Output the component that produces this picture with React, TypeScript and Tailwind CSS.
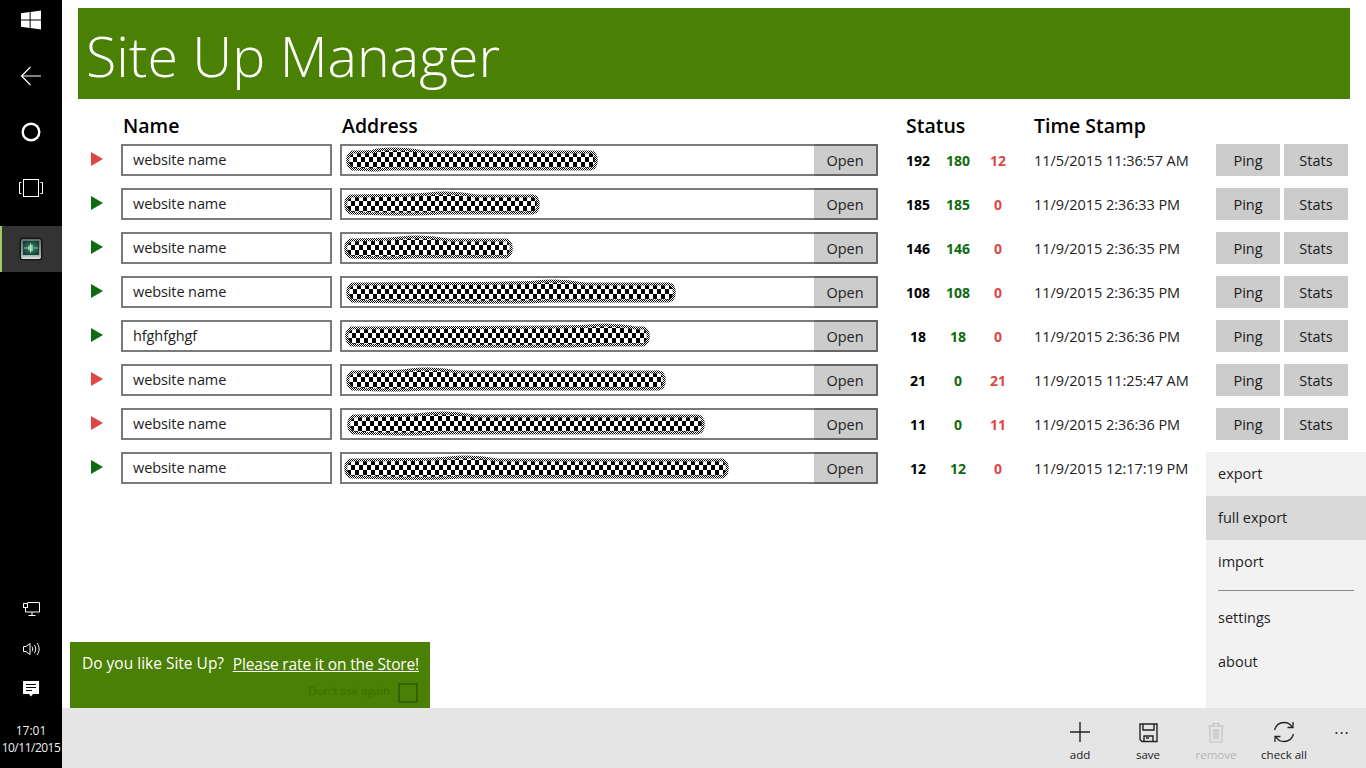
import React from "react";

type Row = { name: string; w: number; color: "red" | "green"; a: number; b: number; c: number; time: string; off: number };

const rows: Row[] = [
  { name: "website name", w: 254, color: "red", a: 192, b: 180, c: 12, time: "11/5/2015 11:36:57 AM", off: 4 },
  { name: "website name", w: 198, color: "green", a: 185, b: 185, c: 0, time: "11/9/2015 2:36:33 PM", off: 2 },
  { name: "website name", w: 171, color: "green", a: 146, b: 146, c: 0, time: "11/9/2015 2:36:35 PM", off: 2 },
  { name: "website name", w: 332, color: "green", a: 108, b: 108, c: 0, time: "11/9/2015 2:36:35 PM", off: 4 },
  { name: "hfghfghgf", w: 307, color: "green", a: 18, b: 18, c: 0, time: "11/9/2015 2:36:36 PM", off: 3 },
  { name: "website name", w: 322, color: "red", a: 21, b: 0, c: 21, time: "11/9/2015 11:25:47 AM", off: 4 },
  { name: "website name", w: 360, color: "red", a: 11, b: 0, c: 11, time: "11/9/2015 2:36:36 PM", off: 5 },
  { name: "website name", w: 387, color: "green", a: 12, b: 12, c: 0, time: "11/9/2015 12:17:19 PM", off: 2 },
];

function Scribble({ w, id }: { w: number; id: number }) {
  const bump = 20 + ((id * 53) % Math.max(1, w - 90));
  const d = `M8 5 C${w * 0.2} 4 ${bump} 5 ${bump + 12} 3 C${bump + 30} 1 ${bump + 44} 2 ${bump + 60} 5 L${w - 8} 5 C${w - 1} 6 ${w - 1} 20 ${w - 8} 22 L${bump + 24} 22 C${bump} 24 40 23 8 22 C1 20 1 7 8 5 Z`;
  return (
    <svg width={w} height={26} viewBox={`0 0 ${w} 26`} className="block shrink-0">
      <defs>
        <pattern id={`chk${id}`} width="8" height="10" patternUnits="userSpaceOnUse">
          <rect width="8" height="10" fill="#fff" />
          <rect x="0" y="0" width="4" height="5" fill="#000" />
          <rect x="4" y="5" width="4" height="5" fill="#000" />
        </pattern>
        <pattern id={`dot${id}`} width="2" height="2" patternUnits="userSpaceOnUse">
          <rect width="2" height="2" fill="#fff" />
          <rect width="1" height="1" fill="#000" />
          <rect x="1" y="1" width="1" height="1" fill="#000" />
        </pattern>
      </defs>
      <path d={d} fill={`url(#chk${id})`} stroke={`url(#dot${id})`} strokeWidth="3" />
    </svg>
  );
}

function Cell({ label }: { label: string }) {
  return (
    <button className="h-8 pt-px flex items-center justify-center bg-[#cccccc] text-[#1a1a1a] text-[14.5px]">{label}</button>
  );
}

function AppIcon() {
  return (
    <svg width="24" height="24" viewBox="0 0 24 24">
      <defs>
        <radialGradient id="scr" cx="0.5" cy="0.5" r="0.6">
          <stop offset="0" stopColor="#3f8f72" />
          <stop offset="1" stopColor="#123c36" />
        </radialGradient>
        <linearGradient id="bez" x1="0" y1="0" x2="0" y2="1">
          <stop offset="0" stopColor="#5f6e6c" />
          <stop offset="0.8" stopColor="#9fabaa" />
          <stop offset="1" stopColor="#e6eaea" />
        </linearGradient>
      </defs>
      <rect x="0.5" y="0.5" width="23" height="23" rx="3.5" fill="#181818" />
      <rect x="2" y="2" width="20" height="20" rx="2" fill="url(#bez)" />
      <rect x="4" y="4" width="16" height="14" fill="url(#scr)" />
      <path d="M5 11h4.500M14.500 11H19" stroke="#8cc9a0" strokeWidth="1" />
      <path d="M10 9v4M11.500 6.500v9M13 8v6" stroke="#b8ecc0" strokeWidth="1.200" />
    </svg>
  );
}

function Sidebar() {
  return (
    <aside className="w-[62px] shrink-0 bg-black flex flex-col items-center text-white">
      <div className="h-[40px] w-full flex items-center justify-center">
        <svg width="20" height="20" viewBox="0 0 20 20" fill="#fff">
          <path d="M0 3.200 8.600 2v7.400H0zM9.600 1.900 20 .4v9H9.600zM0 10.400h8.600v7.600L0 16.800zM9.600 10.400H20v9.200l-10.400-1.500z" />
        </svg>
      </div>
      <div className="h-[71px] w-full flex items-center justify-center">
        <svg width="22" height="20" viewBox="0 0 22 20" fill="none" stroke="#fff" strokeWidth="1.200">
          <path d="M21 10H1.500M10.500 1 1.500 10l9 9" />
        </svg>
      </div>
      <div className="h-[42px] w-full flex items-center justify-center">
        <svg width="20" height="20" viewBox="0 0 20 20" fill="none" stroke="#fff" strokeWidth="2.400">
          <circle cx="10" cy="10" r="8.300" />
        </svg>
      </div>
      <div className="h-[70px] w-full flex items-center justify-center">
        <svg width="24" height="18" viewBox="0 0 24 18" fill="none" stroke="#fff" strokeWidth="1">
          <rect x="4.500" y="0.500" width="15" height="17" />
          <path d="M2.500 3.500H.5v11h2M21.500 3.500h2v11h-2" />
        </svg>
      </div>
      <div className="h-[46px] w-full bg-[#333333] border-l-2 border-[#9ccc65] flex items-center justify-center pr-0.5 mt-[3px]">
        <AppIcon />
      </div>
      <div className="flex-1" />
      <div className="h-[40px] w-full flex items-center justify-center">
        <svg width="17" height="14" viewBox="0 0 17 14" fill="none" stroke="#fff" strokeWidth="1">
          <path d="M4.500.5h12v9.500h-14V5M9 10v3M5.500 13.500h7" />
          <rect x="0.500" y="1.500" width="4" height="4" />
        </svg>
      </div>
      <div className="h-[40px] w-full flex items-center justify-center">
        <svg width="17" height="14" viewBox="0 0 17 14" fill="none" stroke="#fff" strokeWidth="1">
          <path d="M.5 4.500h2.500L7 1.500v11L3 9.500H.5zM9 4.500c1 1.500 1 3.500 0 5M11.500 3c1.700 2.500 1.700 5.500 0 8M14 1c2.800 3.500 2.800 8.500 0 12" />
        </svg>
      </div>
      <div className="h-[40px] w-full flex items-center justify-center">
        <svg width="16" height="16" viewBox="0 0 16 16">
          <path d="M0 0h16v13h-6l-2 2.500L6 13H0z" fill="#fff" />
          <path d="M3 3.500h10M3 6.500h10M3 9.500h6" stroke="#000" strokeWidth="1" />
        </svg>
      </div>
      <div className="h-[59px] w-full flex flex-col items-center pt-[13px] text-[12px] leading-[17px] text-[#f0f0f0]">
        <span>17:01</span>
        <span className="tracking-[-0.5px] whitespace-nowrap">10/11/2015</span>
      </div>
    </aside>
  );
}

function SiteRow({ r, id }: { r: Row; id: number }) {
  return (
    <div className="h-[44px] flex items-center">
      <div className="w-[43px] pl-[13px] flex items-center pb-[2px]">
        <svg width="12" height="14" viewBox="0 0 12 14">
          <path d="M0 0 12 7 0 14z" fill={r.color === "red" ? "#e04646" : "#0e6b0e"} />
        </svg>
      </div>
      <div className="w-[211px] h-8 border-2 border-[#7a7a7a] flex items-center pl-[10px] text-[14.5px] text-[#222] tracking-[-0.1px]">{r.name}</div>
      <div className="ml-[8px] w-[538px] h-8 border-2 border-r-0 border-[#7a7a7a] flex items-center">
        <div className="flex-1 min-w-0 flex items-center overflow-hidden" style={{ paddingLeft: r.off - 1 }}>
          <Scribble w={r.w} id={id} />
        </div>
        <div className="w-[64px] h-8 -my-[2px] bg-[#cccccc] border-2 border-l-0 border-[#666666] flex items-center justify-center pt-px text-[14.5px] text-[#222]">Open</div>
      </div>
      <div className="ml-[20px] w-[40px] text-center font-bold text-[14px] text-black">{r.a}</div>
      <div className="w-[40px] text-center font-bold text-[14px] text-[#0e6b0e]">{r.b}</div>
      <div className="w-[40px] text-center font-bold text-[14px] text-[#e04646]">{r.c}</div>
      <div className="ml-[16px] w-[182px] pt-px text-[14.5px] text-[#222] whitespace-nowrap tracking-[-0.05px]">{r.time}</div>
      {id < 7 ? (
        <div className="grid grid-cols-2 gap-1 w-[132px]">
          <Cell label="Ping" />
          <Cell label="Stats" />
        </div>
      ) : null}
    </div>
  );
}

function CmdButton({ label, dim, children }: { label: string; dim?: boolean; children: React.ReactNode }) {
  return (
    <div className="w-[68px] flex flex-col items-center">
      <div className="h-[35px] flex items-end justify-center">{children}</div>
      <span className={`mt-[4px] text-[11.5px] leading-[16px] whitespace-nowrap ${dim ? "text-[#b4b4b4]" : "text-[#1a1a1a]"}`}>{label}</span>
    </div>
  );
}

export default function App() {
  return (
    <div
      className="w-[1366px] h-[768px] overflow-hidden flex bg-white relative"
      style={{ fontFamily: '"Open Sans", "Noto Sans", "Liberation Sans", sans-serif' }}
    >
      <Sidebar />
      <main className="flex-1 flex flex-col min-w-0">
        <div className="flex-1 min-h-0 pl-[16px] pr-[16px] pt-[8px]">
          <div className="h-[91px] bg-[#4a8003] flex items-center pl-[8px] pt-[4px] text-white text-[55.5px] font-[350] leading-none">
            Site Up Manager
          </div>
          <div className="h-[39px] flex items-start pt-[12px] text-[19.5px] font-semibold text-black leading-[30px]">
            <span className="ml-[45px] w-[219px]">Name</span>
            <span className="w-[564px]">Address</span>
            <span className="w-[128px]">Status</span>
            <span>Time Stamp</span>
          </div>
          <div>
            {rows.map((r, i) => (
              <SiteRow key={i} r={r} id={i} />
            ))}
          </div>
        </div>
        <div className="h-[60px] bg-[#e5e5e5] flex justify-end items-start relative">
          <CmdButton label="add">
            <svg width="22" height="22" viewBox="0 0 22 22" stroke="#222" strokeWidth="1.400"><path d="M11 1v20M1 11h20" /></svg>
          </CmdButton>
          <CmdButton label="save">
            <svg width="19" height="20" viewBox="0 0 19 20" fill="none" stroke="#222" strokeWidth="1.400">
              <path d="M1 1h17v17.500H3L1 16.500zM4 1v6h11V1M5 18.500V13h9v5.500M7 15h3" />
            </svg>
          </CmdButton>
          <CmdButton label="remove" dim>
            <svg width="18" height="21" viewBox="0 0 18 21" fill="none" stroke="#c0c0c0" strokeWidth="1.200">
              <path d="M1 4h16M6 4V1.500h6V4M3 4v16h12V4M7 7v10M9 7v10M11 7v10" />
            </svg>
          </CmdButton>
          <CmdButton label="check all">
            <svg width="22" height="22" viewBox="0 0 22 22" fill="none" stroke="#222" strokeWidth="1.300">
              <path d="M1.500 9C3 4 7 1.500 11 1.500c3.500 0 6.500 1.700 8 4.500M20.500 13c-1.500 5-5.500 7.500-9.500 7.500-3.500 0-6.500-1.700-8-4.500M20 1v5.500h-5.500M2 21v-5.500h5.500" />
            </svg>
          </CmdButton>
          <div className="w-[48px] h-[50px] flex items-center justify-center text-[16px] text-[#222] tracking-[1px]">···</div>
        </div>
      </main>

      <div className="absolute left-[1206px] top-[452px] w-[160px] h-[256px] bg-[#f2f2f2] text-[14.5px] text-[#222]">
        <div className="h-[44px] flex items-center pl-[12px]">export</div>
        <div className="h-[44px] flex items-center pl-[12px] bg-[#d9d9d9]">full export</div>
        <div className="h-[44px] flex items-center pl-[12px]">import</div>
        <div className="h-[12px] flex items-start pl-[12px] pr-[12px]"><div className="w-full h-px bg-[#8c8c8c] mt-[6px]" /></div>
        <div className="h-[44px] flex items-center pl-[12px]">settings</div>
        <div className="h-[44px] flex items-center pl-[12px]">about</div>
      </div>

      <div className="absolute left-[70px] top-[642px] w-[360px] h-[66px] bg-[#4a8003] pl-[12px] pr-[11px] pt-[10px] flex flex-col">
        <div className="flex items-start justify-between text-white text-[15.5px] leading-[22px] whitespace-nowrap">
          <span>Do you like Site Up?</span>
          <span className="underline mt-[1px] tracking-[-0.15px]">Please rate it on the Store!</span>
        </div>
        <div className="flex items-center justify-end gap-2 mt-[7px] pr-px">
          <span className="text-[11.5px] text-[#3d6c05] pb-[4px]">Don't ask again</span>
          <span className="w-5 h-5 border-2 border-[#336205]" />
        </div>
      </div>
    </div>
  );
}
